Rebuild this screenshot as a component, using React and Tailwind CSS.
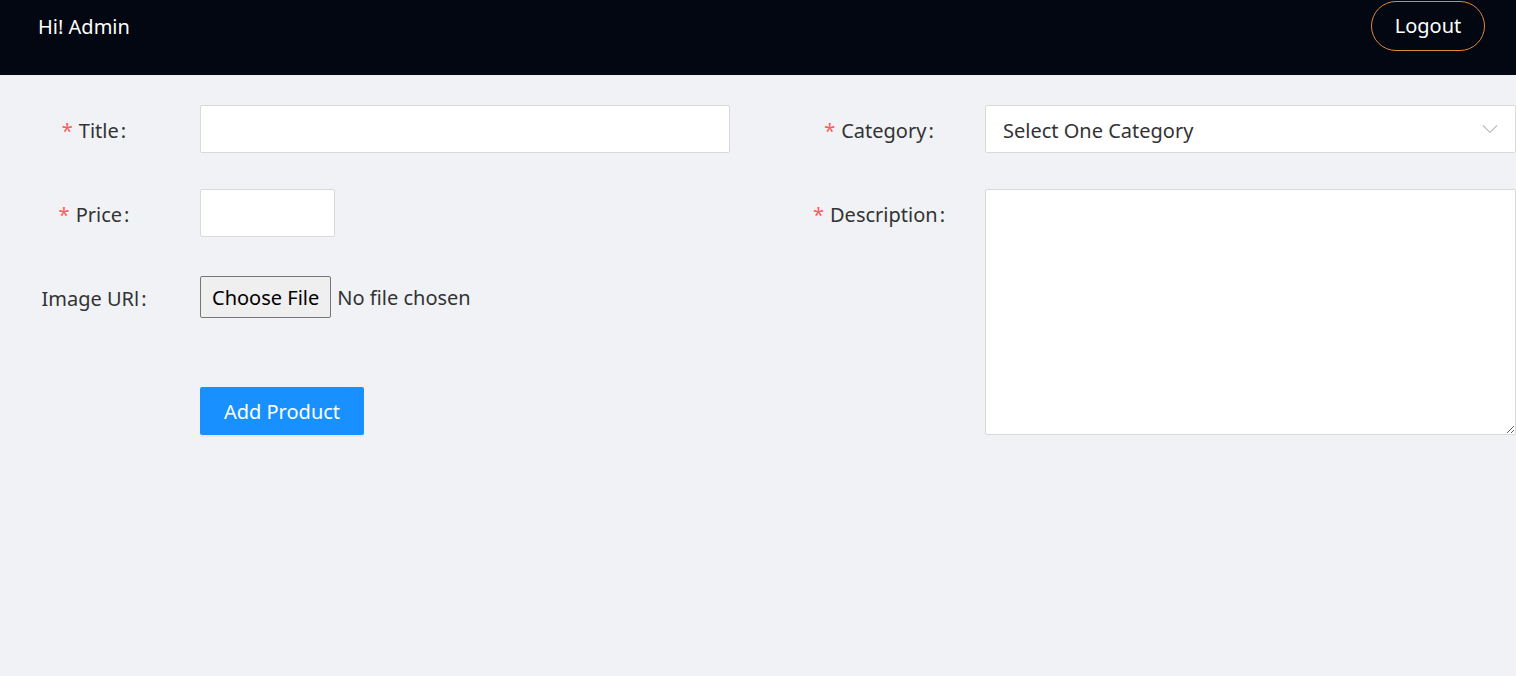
const Label = ({ children, required }) => (
  <div className="w-[192px] shrink-0 flex justify-center items-center h-[48px] pt-[4px] text-[20px] text-[#333]">
    {required && <span className="text-[#ff5a5c] mr-[6px] text-[20px]">*</span>}
    <span>{children}</span>
    <span className="ml-[2px] mr-[4px]">:</span>
  </div>
)

const App = () => {
  return (
    <div className="min-h-screen bg-[#f0f2f5]" style={{ fontFamily: '"Noto Sans", "Open Sans", sans-serif' }}>
      {/* Header */}
      <header className="h-[75px] bg-[#030711] flex items-start justify-between pl-[38px] pr-[31px]">
        <div className="h-[52px] pt-[2px] flex items-center text-white text-[20px]">Hi! Admin</div>
        <button className="mt-px h-[50px] w-[114px] rounded-full border border-[#e0883a] text-white text-[20px]">
          Logout
        </button>
      </header>

      {/* Form */}
      <div className="pt-[30px] grid grid-cols-[730px_1fr] gap-x-[55px]">
        {/* Left column */}
        <div className="flex flex-col gap-y-[36px]">
          <div className="flex gap-x-[8px]">
            <Label required>Title</Label>
            <input className="flex-1 h-[48px] bg-white border border-[#d9d9d9] rounded-[2px] px-[11px] text-[20px] outline-none" />
          </div>
          <div className="flex gap-x-[8px]">
            <Label required>Price</Label>
            <input className="w-[135px] h-[48px] bg-white border border-[#d9d9d9] rounded-[2px] px-[11px] text-[20px] outline-none" />
          </div>
          <div className="flex gap-x-[8px] items-center">
            <Label>Image URl</Label>
            <div className="flex items-center text-[20px] text-[#333]">
              <button className="h-[42px] px-[11px] pt-[2px] bg-[#efefef] border border-[#767676] rounded-[2px] text-black">
                Choose File
              </button>
              <span className="ml-[6px] pt-[2px]">No file chosen</span>
            </div>
          </div>
          <div className="flex gap-x-[8px] mt-[30px]">
            <div className="w-[192px] shrink-0" />
            <button className="h-[48px] w-[164px] pt-[2px] bg-[#1890ff] text-white text-[20px] rounded-[2px] shadow-[0_2px_0_rgba(0,0,0,0.045)]">
              Add Product
            </button>
          </div>
        </div>

        {/* Right column */}
        <div className="flex flex-col gap-y-[36px]">
          <div className="flex gap-x-[8px]">
            <Label required>Category</Label>
            <div className="flex-1 h-[48px] bg-white border border-[#d9d9d9] rounded-[2px] pl-[17px] pr-[17px] pt-[4px] flex items-center justify-between text-[20px] text-[#333]">
              <span>Select One Category</span>
              <svg width="16" height="10" viewBox="0 0 16 10" fill="none" className="-mt-[4px]">
                <path d="M1 1.5 L8 8.5 L15 1.5" stroke="#bfbfbf" strokeWidth="1.2" />
              </svg>
            </div>
          </div>
          <div className="flex gap-x-[8px]">
            <Label required>Description</Label>
            <textarea className="flex-1 h-[246px] bg-white border border-[#d9d9d9] rounded-[2px] px-[11px] py-[4px] text-[20px] outline-none resize" />
          </div>
        </div>
      </div>
    </div>
  )
}

export default App
